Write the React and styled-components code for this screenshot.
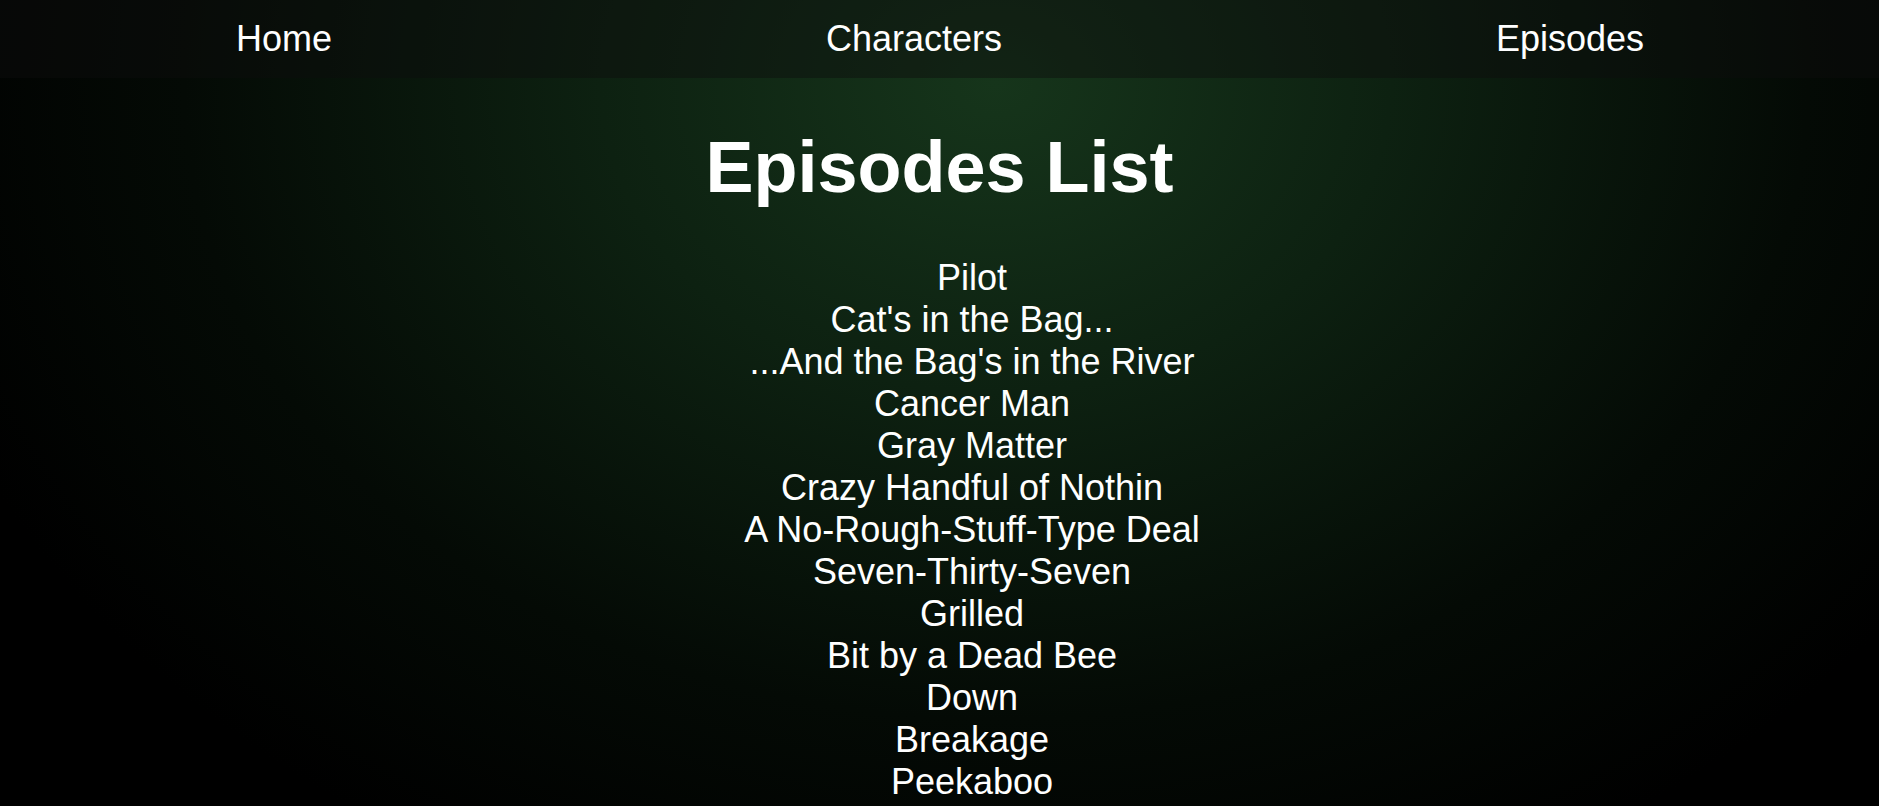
import React from 'react'
import styled, { createGlobalStyle } from 'styled-components'

const episodes = [
    'Pilot',
    "Cat's in the Bag...",
    "...And the Bag's in the River",
    'Cancer Man',
    'Gray Matter',
    'Crazy Handful of Nothin',
    'A No-Rough-Stuff-Type Deal',
    'Seven-Thirty-Seven',
    'Grilled',
    'Bit by a Dead Bee',
    'Down',
    'Breakage',
    'Peekaboo',
    'Negro Y Azul',
    'Better Call Saul',
    '4 Days Out',
]

function App() {
    return <>
        <GlobalStyle />
        <Page>
            {/* Top navigation */}
            <NavBar>
                <NavLink href="#">Home</NavLink>
                <NavLink href="#">Characters</NavLink>
                <NavLink href="#">Episodes</NavLink>
            </NavBar>

            <Title>Episodes List</Title>

            <EpisodeList>
                {episodes.map(name => (
                    <EpisodeItem key={name}>{name}</EpisodeItem>
                ))}
            </EpisodeList>
        </Page>
    </>
}

export default App

const GlobalStyle = createGlobalStyle`
    html, body {
        margin: 0;
        padding: 0;
        overflow: hidden;
        background: #000;
    }

    body {
        font-family: "Liberation Sans", Arial, sans-serif;
        color: #fff;
    }
`

const Page = styled.div`
    min-height: 100vh;
    background: radial-gradient(
        ellipse 60% 95% at 53% 9%,
        #16351b 0%,
        #0d2111 35%,
        #040a05 72%,
        #000 100%
    );
    background-color: #000;
`

const NavBar = styled.nav`
    display: flex;
    align-items: center;
    justify-content: space-between;
    height: 78px;
    padding: 0 235px 0 236px;
    background-color: rgba(14, 14, 14, 0.45);
`

const NavLink = styled.a`
    color: #fff;
    font-size: 36px;
    text-decoration: none;
`

const Title = styled.h1`
    margin: 48px 0 49px;
    font-size: 72px;
    font-weight: bold;
    text-align: center;
`

const EpisodeList = styled.ul`
    list-style: none;
    margin: 0;
    padding: 0 0 0 65px;
    text-align: center;
`

const EpisodeItem = styled.li`
    font-size: 36px;
`
